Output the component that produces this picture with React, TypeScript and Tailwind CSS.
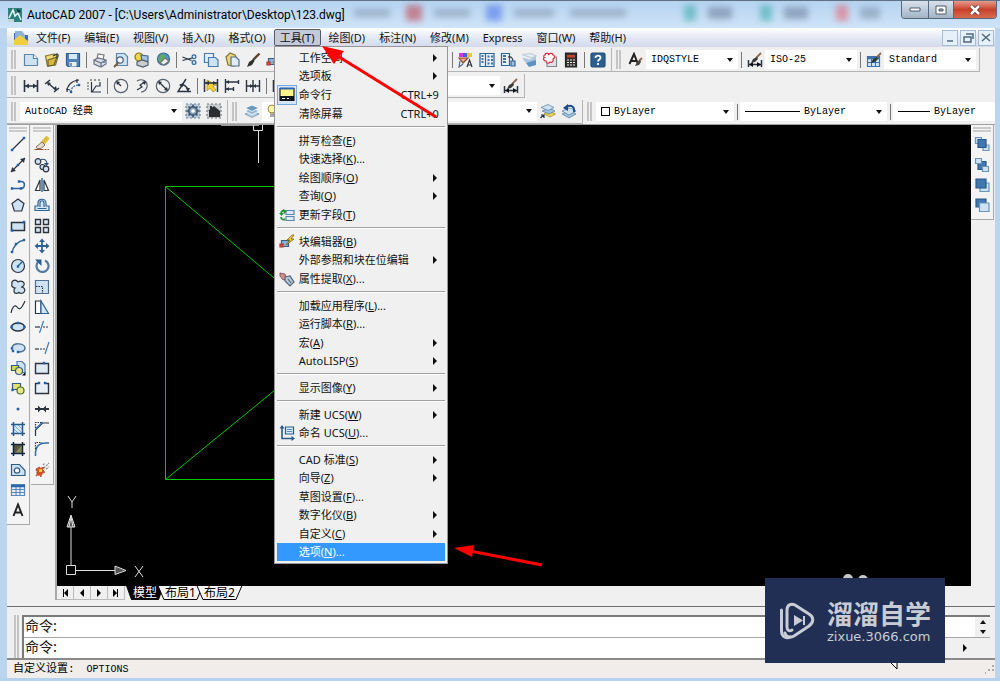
import React from 'react';
import { Undo2, Redo2, Hand, ZoomIn, ZoomOut, Search, Maximize } from 'lucide-react';

type IconFn = () => React.ReactElement;

const INK = '#2b3440';
const BLUE = '#2f6496';
const PALE = '#cfe2f1';

interface SvgProps {
  children: React.ReactNode;
  size?: number;
}

const Svg: React.FC<SvgProps> = ({ children, size = 16 }) => (
  <svg width={size} height={size} viewBox="0 0 16 16" fill="none" stroke={INK} strokeWidth="1.2" className="shrink-0" aria-hidden="true">
    {children}
  </svg>
);

const Dots: React.FC<{ at: number[][] }> = ({ at }) => (
  <>
    {at.map(([x, y]) => (
      <rect key={`${x}-${y}`} x={x - 1.2} y={y - 1.2} width="2.4" height="2.4" fill="#1f62a8" stroke="none" />
    ))}
  </>
);

// --- Standard toolbar ---
const NewFile: IconFn = () => (
  <Svg><path d="M1.5 2.5h9l4 4v7h-13z" fill={PALE} stroke="#5d86aa" /><path d="M10.5 2.5v4h4" fill="#fff" stroke="#5d86aa" /></Svg>
);
const OpenFile: IconFn = () => (
  <Svg><path d="M1.5 4l8-2 5 1-3 10-8 1z" fill="#f0dc70" stroke="#7d7440" /><path d="M4 8l9-3-3 8-6 1z" fill="#d9b93c" stroke="#6b6030" /><path d="M9 4l4-2v4" stroke={INK} /></Svg>
);
const SaveFile: IconFn = () => (
  <Svg><path d="M1.5 1.5h13v13H3L1.5 13z" fill="#4f83b6" stroke="#2d5f93" /><path d="M4 2h8v5H4z" fill="#d6e8f6" stroke="none" /><path d="M4.5 10h7v4.500h-7z" fill="#e8f1f8" stroke="none" /><path d="M6 11v3" stroke={BLUE} /></Svg>
);
const Print: IconFn = () => (
  <Svg><path d="M5 7l1-5 6 1-1 5" fill="#fff" stroke="#777" /><path d="M2 8l4-2 8 2v4l-5 3-7-3z" fill="#d9dde4" stroke="#6a7485" /><path d="M2 8l7 3 5-3M9 11v4" stroke="#6a7485" /><circle cx="12" cy="10" r="1" fill="#4f83b6" stroke="none" /></Svg>
);
const Preview: IconFn = () => (
  <Svg><path d="M3.5 1.5h8l3 3v9h-11z" fill={PALE} stroke="#5d86aa" /><circle cx="7" cy="8" r="3.2" fill="#eef6fc" stroke="#4b6176" /><path d="M5 11l-4 4" stroke="#7a5b34" strokeWidth="2" /></Svg>
);
const Publish: IconFn = () => (
  <Svg><circle cx="5" cy="5" r="4" fill="#f2d648" stroke="#87752a" /><path d="M7 3l7 1v5l-6 1z" fill="#9fc3e0" stroke="#466a8c" /><path d="M3 10l5-2 6 2v3l-5 2-6-2z" fill="#ccc" stroke="#555f70" /></Svg>
);
const Globe: IconFn = () => (
  <Svg><circle cx="8.5" cy="7" r="6" fill="#4e94cf" stroke="#376c9a" /><path d="M5 3c3-2 6 0 5 3s-4 1-3 4-3 0-4-2z" fill="#62ab5c" stroke="none" /><path d="M10 6l4 3-5 4-4-2z" fill="#eee" stroke="#777" /></Svg>
);
const Cut: IconFn = () => (
  <Svg><path d="M.5 5l9 3.500M.5 8.500L10 6" /><circle cx="12" cy="4.8" r="1.9" stroke={BLUE} /><circle cx="12" cy="10.5" r="1.9" stroke={BLUE} /></Svg>
);
const Copy: IconFn = () => (
  <Svg><path d="M1.5 1.5h9v9h-9z" fill="#e5f0f8" stroke="#4a7ba8" /><path d="M5.5 5.5h7L15 8v6.500H5.500z" fill={PALE} stroke="#4a7ba8" /></Svg>
);
const Paste: IconFn = () => (
  <Svg><path d="M2 5l4-4 5 2 3 6-4 5-6-1z" fill="#ead675" stroke="#887539" /><path d="M7 5h5l3 3v6H7z" fill="#e1ecf5" stroke="#4b6f90" /></Svg>
);
const Brush: IconFn = () => (
  <Svg><path d="M14.5 1.500L8 8" stroke="#5b4430" strokeWidth="2.4" /><path d="M8.5 7L4 10l-2 5 5-2 2.500-4z" fill="#30302f" stroke="none" /></Svg>
);
const Block: IconFn = () => (
  <Svg><path d="M2.5 6.500h7v6h-7z" fill="#8ab1d3" stroke="#3c5e80" /><path d="M1 13h3v-3H1z" fill="#e0593c" stroke="#a33" /><path d="M13 1L8 6h3L7 11l8-6h-3l3-4z" fill="#f6cf34" stroke="#7c6316" strokeWidth="0.8" /></Svg>
);
const Properties: IconFn = () => (
  <Svg><path d="M1 1h4v4H1z" fill="#d63ad2" stroke="none" /><path d="M5 1h4v4H5z" fill="#3a63de" stroke="none" /><path d="M9 1h5v4H9z" fill="#e7c832" stroke="none" /><path d="M1 6h9l-5 5z" fill="#e9a188" stroke="#91492f" /><path d="M2 9l-1 6 4-3" stroke="#4d7095" /><path d="M9 15l2.500-7 2.500 7M10 13h3" /></Svg>
);
const DesignCenter: IconFn = () => (
  <Svg><path d="M1 1.500h14v13H1z" fill="#e8f0f7" stroke={BLUE} /><path d="M6.5 2v12" stroke={BLUE} /><path d="M2.5 4h2M2.5 7h2M2.5 10h2M8.500 4.500h2M12 4.500h2M8.500 8h2M12 8h2M8.500 11.500h2M12 11.500h2" strokeWidth="2" stroke="#3d73a5" /></Svg>
);
const Palettes: IconFn = () => (
  <Svg><path d="M1.5 1.500h8v12h-8z" fill="#e8f0f7" stroke={BLUE} /><path d="M3 4h3M3 7h3M3 10h3" stroke="#3d73a5" strokeWidth="2" /><path d="M8 5c4-1 5 2 5 5" stroke={INK} /><path d="M11 9h4v5h-4z" fill="#9bc0de" stroke={BLUE} /></Svg>
);
const SheetSet: IconFn = () => (
  <Svg><path d="M1 2.500l9-1 5 2.500-4 2z" fill="#e6edf3" stroke="#c0cbd4" /><path d="M1 5.500l8 2 6-3.500v5l-6 3-5-2z" fill="#a9c8e2" stroke="none" /><path d="M5 11l10-3v5l-7 2z" fill="#5d93c2" stroke="none" /></Svg>
);
const Markup: IconFn = () => (
  <Svg><path d="M5 5h9.500v9.500H5z" fill="#dce2e8" stroke="#888" /><path d="M3 3c0-2 3-2 3.500-.5C8 1 11 1 11 3c2 0 2 3 0 4 1 2-1 4-3 3-1 2-4 1-4-1C1 9 1 6 2.500 5.500 1 5 2 3 3 3z" fill="#fff" stroke="#d5283d" /></Svg>
);
const Calc: IconFn = () => (
  <Svg><path d="M2.5 1h11v14h-11z" fill="#33302f" stroke="#222" /><path d="M4 3h8v2.500H4z" fill="#c7452f" stroke="none" /><path d="M4 8h8M4 10.500h8M4 13h8" stroke="#eee" strokeDasharray="2 1" /></Svg>
);
const Help: IconFn = () => (
  <Svg><rect x="1" y="1" width="14" height="14" rx="1.5" fill="#2c5e92" stroke="#234b75" /><path d="M5.5 6c0-3.500 5.500-3 5 0-.3 1.500-2.500 1.500-2.500 3.500M8 11v2" stroke="#fff" strokeWidth="1.8" /></Svg>
);

// --- Dimension toolbar ---
const DimLinear: IconFn = () => (
  <Svg><path d="M1.5 2v12M14.5 2v12M2 8h12" strokeWidth="1.6" /><path d="M2 8l4-2.500v5zM14 8l-4-2.500v5z" fill={INK} stroke="none" /></Svg>
);
const DimAligned: IconFn = () => (
  <Svg><path d="M1 6l5-4M10 14l5-4M4 5l8 7" strokeWidth="1.5" /><path d="M3 4l4 1-3 3zM13 12l-4-1 3-3z" fill={INK} stroke="none" /></Svg>
);
const DimArc: IconFn = () => (
  <Svg><path d="M2 14C2 7 7 3 14 2" stroke={INK} /><path d="M6 14c0-4 3-7 8-7" stroke={BLUE} strokeDasharray="2 1" /><Dots at={[[6, 14], [14, 7]]} /><path d="M1 11l4 1M12 1v4" /></Svg>
);
const DimOrdinate: IconFn = () => (
  <Svg><path d="M5.5 4v10H15M6 14l4-6h4V4" /><path d="M1 5h2M1 8h2M1 11h2M5 1v2M9 1v2M13 1v2" stroke="#555" /></Svg>
);
const DimRadius: IconFn = () => (
  <Svg><circle cx="8" cy="8" r="6.7" stroke="#59616b" /><path d="M8 8L4.500 4.500" stroke={INK} /><path d="M3 3l4 1-3 3z" fill={INK} stroke="none" /></Svg>
);
const DimJogged: IconFn = () => (
  <Svg><path d="M3 3c5-3 11 0 10 6-1 3-3 5-6 5" stroke="#59616b" /><path d="M3 12l5-3-2-2 5-3" /><path d="M12 3l-1 4-3-3z" fill={INK} stroke="none" /></Svg>
);
const DimDiameter: IconFn = () => (
  <Svg><circle cx="8" cy="8" r="6.7" stroke="#59616b" /><path d="M4 4l8 8" /><path d="M3 3l4 1-3 3zM13 13l-4-1 3-3z" fill={INK} stroke="none" /></Svg>
);
const DimAngular: IconFn = () => (
  <Svg><path d="M10 1L2 13.500h13M4 7c4-1 8 2 8 6" strokeWidth="1.4" /><path d="M3 7l4-2v4zM12 14l-2-4h4z" fill={INK} stroke="none" /></Svg>
);
const QuickDim: IconFn = () => (
  <Svg><path d="M4 2l10 5-4 1 3 4-3 2-3-4-3 3z" fill="#f0d232" stroke="#a08f20" strokeWidth="0.7" /><path d="M1.5 1v13M14.5 1v13M2 5h12" strokeWidth="1.5" /><path d="M2 5l4-2v4zM14 5l-4-2v4z" fill={INK} stroke="none" /></Svg>
);
const DimBaseline: IconFn = () => (
  <Svg><path d="M1.5 1v14M2 4h12M14.5 2v4M2 11h7M9.500 9v4" strokeWidth="1.4" /><path d="M2 4l3-2v4zM2 11l3-2v4z" fill={INK} stroke="none" /></Svg>
);
const DimContinue: IconFn = () => (
  <Svg><path d="M1.500 2v12M8 2v12M14.500 2v12M1 8h14" strokeWidth="1.4" /><path d="M8 8L5 6v4zM8 8l3-2v4z" fill={INK} stroke="none" /></Svg>
);
const DimStyle: IconFn = () => (
  <Svg><path d="M1.500 8v7M14.500 8v7M2 12.500h12" strokeWidth="1.5" /><path d="M2 12.500l4-2.500v5zM14 12.500l-4-2.500v5z" fill="#111" stroke="none" /><path d="M14 1L9 6" stroke="#8b6a52" strokeWidth="1.8" /><path d="M10 5L6 7l-2 4 4-1 3-3z" fill="#3a3a3a" stroke="none" /></Svg>
);
const TextStyle: IconFn = () => (
  <Svg><path d="M1.500 12L6 2l4 10M3 9h6" strokeWidth="2" stroke="#222" /><path d="M14 6l-3 3" stroke="#8b6a52" strokeWidth="1.8" /><path d="M12 8l-3 2-2 4 4-1 2-3z" fill="#444" stroke="none" /></Svg>
);
const TableStyle: IconFn = () => (
  <Svg><path d="M1.500 4.500h12v10h-12z" fill="#d8e8f6" stroke="#3773ad" /><path d="M1 6h12" stroke="#3773ad" strokeWidth="2.5" /><path d="M2 10.500h11M5.500 7v7M9.500 7v7" stroke="#3773ad" /><path d="M15 1l-5 5" stroke="#8b6a52" strokeWidth="1.8" /><path d="M11 5L7 7l-2 4 4-1 3-3z" fill="#2b3b33" stroke="none" /></Svg>
);

// --- Workspace and layer toolbar ---
const Gear: IconFn = () => (
  <Svg><path d="M1 1h14v14H1z" fill="#b9cad8" stroke="#6f8597" strokeDasharray="2 2" /><circle cx="8" cy="8" r="4.3" fill="#8ba4b8" stroke="#3f5870" strokeWidth="1.6" /><path d="M8 1.500v3M8 11.500v3M1.500 8h3M11.500 8h3M3.500 3.500l2 2M10.500 10.500l2 2M3.500 12.500l2-2M10.500 5.500l2-2" stroke="#3f5870" strokeWidth="1.7" /><circle cx="8" cy="8" r="1.8" fill="#fff" stroke="none" /></Svg>
);
const HomeSpace: IconFn = () => (
  <Svg><path d="M1 1h14v14H1z" fill="#c9ccce" stroke="#777" strokeDasharray="2 2" /><path d="M2 8l6-5 6 5v6H3V8zM4 3h2v3H4z" fill="#2b2d30" stroke="none" /></Svg>
);
const Layers: IconFn = () => (
  <Svg><path d="M1 11l7 3.500 7-3.500-7-3z" fill="#b9cfe0" stroke="#6f93b1" strokeWidth="0.8" /><path d="M1 8l7 3.500L15 8 8 5z" fill="#8db2d1" stroke="#fff" strokeWidth="0.8" /><path d="M1 5l7 3.500L15 5 8 2z" fill="#6b9ac1" stroke="#fff" strokeWidth="0.8" /></Svg>
);
const LayerCurrent: IconFn = () => (
  <Svg><path d="M4 11l6 3 5.500-3-6-3z" fill="#ead24a" stroke="#9c8b2c" strokeWidth="0.7" /><path d="M2 8l7 3 6-3-6-3z" fill="#9fc2de" stroke="#557c9e" strokeWidth="0.7" /><path d="M1 4.500l7 3 6-3-6-3z" fill="#cfe2f1" stroke="#557c9e" strokeWidth="0.7" /><path d="M.5 15l3-3M1 12h3v3" /></Svg>
);
const LayerPrev: IconFn = () => (
  <Svg><path d="M1 11l7 4 7-4-6-3z" fill="#9fc2de" stroke="#557c9e" strokeWidth="0.7" /><path d="M1 8l7 4 7-4-6-3z" fill="#cfe2f1" stroke="#557c9e" strokeWidth="0.7" /><path d="M13 9c1-5-3-8-7-5" stroke="#1e4c86" strokeWidth="2" /><path d="M7 1v7L2 5z" fill="#1e4c86" stroke="none" /></Svg>
);

// --- Draw toolbar ---
const DRAW_ICONS: [string, IconFn][] = [
  ['直线', () => <Svg><path d="M2 14L14 2" stroke={INK} /><Dots at={[[2, 14], [14, 2]]} /></Svg>],
  ['构造线', () => <Svg><path d="M1 15L15 1" stroke={INK} /><path d="M1 15l1-5 4 4zM15 1l-1 5-4-4z" fill={INK} stroke="none" /><Dots at={[[8, 8]]} /></Svg>],
  ['多段线', () => <Svg><path d="M1 11.500h10c4 0 5-7 0-7H9" stroke={BLUE} strokeWidth="1.6" /><Dots at={[[2, 11.5], [11, 11.5], [9, 4.5]]} /></Svg>],
  ['正多边形', () => <Svg><path d="M8 2l6 4.500L11.700 14H4.300L2 6.500z" fill={PALE} stroke={INK} /></Svg>],
  ['矩形', () => <Svg><path d="M1.500 4.500h13v8h-13z" fill={PALE} stroke={INK} strokeWidth="1.5" /><Dots at={[[2, 12.5], [14, 4]]} /></Svg>],
  ['圆弧', () => <Svg><path d="M2 15C3 8 8 3 14.500 2" stroke={BLUE} strokeWidth="1.5" /><Dots at={[[2, 14], [6, 6], [14, 2]]} /></Svg>],
  ['圆', () => <Svg><circle cx="8" cy="8" r="6.5" fill={PALE} stroke={INK} /><path d="M8 8l4-4" stroke="#1f62a8" strokeWidth="1.5" /><Dots at={[[8, 8.5]]} /></Svg>],
  ['修订云线', () => <Svg><path d="M2 5c-1-4 4-5 6-2 3-2 7 0 6 3-1 2-3 2-3 2 4 0 5 4 2 6-2 1-4 0-4-1-1 2-5 2-5-1 0-2 1-3 1-3-2 0-4-2-3-4z" fill={PALE} stroke={INK} /></Svg>],
  ['样条曲线', () => <Svg><path d="M1 14c1-6 4-9 6-6s4 3 8-6" stroke={INK} /></Svg>],
  ['椭圆', () => <Svg><ellipse cx="8" cy="8" rx="6.5" ry="4" fill={PALE} stroke={INK} strokeWidth="1.5" /><Dots at={[[8, 4], [1.5, 8], [14.5, 8]]} /></Svg>],
  ['椭圆弧', () => <Svg><path d="M2 8c0-6 13-5 13 0 0 3-3 4-7 4" fill={PALE} stroke="#53718d" strokeWidth="1.5" /><Dots at={[[2, 8.5], [8, 12], [3, 11]]} /></Svg>],
  ['插入块', () => <Svg><path d="M7 1.500h5l3 3v8H7z" fill={PALE} stroke="#4a7ba8" /><path d="M1.500 5.500h7v5h-7z" fill="#d8d84e" stroke="#305c86" /><circle cx="9" cy="11" r="3.5" fill="#e7e78b" stroke="#305c86" /><path d="M15.500 12v3.500H12z" fill="#000" stroke="none" /></Svg>],
  ['创建块', () => <Svg><path d="M2.500 3.500h8v6h-8z" fill="#e4e46b" stroke="#305c86" /><circle cx="10.5" cy="10.5" r="3.5" fill="#e7e78b" stroke="#4c6d2c" /><Dots at={[[2.5, 10]]} /></Svg>],
  ['点', () => <Svg><circle cx="8" cy="8" r="1.5" fill="#1f62a8" stroke="none" /></Svg>],
  ['图案填充', () => <Svg><path d="M3.500 3.500h9v9h-9z" fill="#dcebf7" stroke="none" /><path d="M1 3.500h14M1 12.500h14M3.500 1v14M12.500 1v14" stroke="#28598a" strokeWidth="1.5" /><path d="M4 8l4 4M4 4l8 8M8 4l4 4" stroke="#5d93c2" strokeWidth="0.8" /></Svg>],
  ['渐变色', () => <Svg><path d="M3.500 3.500h9v9h-9z" fill="#57583f" stroke="none" /><path d="M5 12l7-8v8z" fill="#8b8b5c" stroke="none" /><path d="M1 3.500h14M1 12.500h14M3.500 1v14M12.500 1v14" stroke="#10253c" strokeWidth="1.5" /></Svg>],
  ['面域', () => <Svg><path d="M1.500 2.500h8l5.500 6v5H1.500z" fill={PALE} stroke="#305c86" /><circle cx="7" cy="8.5" r="2.7" fill="#fff" stroke="#305c86" /></Svg>],
  ['表格', () => <Svg><path d="M1.500 2.500h13v11h-13z" fill="#e8f2fb" stroke="#5a88bd" /><path d="M1 4h14" stroke="#2f66a8" strokeWidth="2.5" /><path d="M2 7.500h12M2 10.500h12M6 5v8M10 5v8" stroke="#5a88bd" /></Svg>],
  ['多行文字', () => <Svg><path d="M3.500 14L8 2.500 12.500 14M5 10.500h6" stroke="#222" strokeWidth="1.9" /></Svg>],
];

// --- Modify toolbar ---
const MODIFY_ICONS: [string, IconFn][] = [
  ['删除', () => <Svg><path d="M14 1L8 8" stroke="#e0bd3a" strokeWidth="4.5" /><path d="M8 6l3 3-4 3.500H3L2 11z" fill="#e6dccb" stroke="#6b5d50" strokeWidth="0.8" /><path d="M.5 13.500H15" stroke="#a0522d" strokeDasharray="9 1 2 1" /></Svg>],
  ['复制', () => <Svg><circle cx="4" cy="4.5" r="2.8" fill={PALE} /><circle cx="8.5" cy="10" r="2.5" fill={PALE} /><circle cx="12" cy="12" r="2.8" fill={PALE} /><path d="M7 2.500c4-1 6 1 6 5" stroke="#1f4f88" /><path d="M10 6h5l-2.500 3z" fill="#1f4f88" stroke="none" /></Svg>],
  ['镜像', () => <Svg><path d="M6 3v10.500H1.500z" fill="#fff" /><path d="M10 3v10.500h4.500z" fill="#fff" /><path d="M8 1v14" stroke="#5d93c2" strokeWidth="2" /></Svg>],
  ['偏移', () => <Svg><path d="M1 13.500h14V9h-3V6c0-5-8-5-8 0v3H1z" fill="#d7e7f4" stroke={BLUE} /><path d="M3.500 11.500h9M6 10V6c0-3 4-3 4 0v4" stroke={BLUE} /></Svg>],
  ['阵列', () => <Svg><path d="M1.500 1.500h5v5h-5zM9.500 1.500h5v5h-5zM1.500 9.500h5v5h-5zM9.500 9.500h5v5h-5z" fill="#dfe9f1" stroke={INK} strokeWidth="1.4" /></Svg>],
  ['移动', () => <Svg><path d="M8 2v12M2 8h12" stroke={BLUE} strokeWidth="1.8" /><path d="M8 .5L11 4H5zM8 15.500l3-3.500H5zM.5 8L4 5v6zM15.500 8L12 5v6z" fill={BLUE} stroke="none" /></Svg>],
  ['旋转', () => <Svg><path d="M4 4a6 6 0 1 0 7-1.500" stroke="#527ba3" strokeWidth="2.2" /><path d="M1 1.500h6.500V8z" fill="#2c5e92" stroke="none" /></Svg>],
  ['缩放', () => <Svg><path d="M1.500 1.500h13v13h-13z" fill={PALE} stroke="#527091" /><path d="M2 7.500h6.500V14" strokeDasharray="1.5 1" /></Svg>],
  ['拉伸', () => <Svg><path d="M1.500 2v12.500H7V2z" fill="#fff" /><path d="M7 2l7.500 12.500H7z" fill="#d5e6f4" stroke={BLUE} /></Svg>],
  ['修剪', () => <Svg><path d="M1 8h5" /><path d="M9 8h6" strokeDasharray="2 1" /><path d="M9.500 2l-4 12" stroke="#3b7cc0" /></Svg>],
  ['延伸', () => <Svg><path d="M1 9h4" /><path d="M6 9h5" strokeDasharray="2 1" /><path d="M15 2l-4 12" stroke="#3b7cc0" /></Svg>],
  ['打断于点', () => <Svg><path d="M1.500 3.500h13v10h-13z" fill="#dfe9f1" stroke={INK} strokeWidth="1.4" /><Dots at={[[10, 3]]} /></Svg>],
  ['打断', () => <Svg><path d="M4 3.500H1.500v10h13v-10H12" fill="#e9f0f5" stroke={INK} strokeWidth="1.4" /><Dots at={[[5, 3], [11, 3]]} /></Svg>],
  ['合并', () => <Svg><path d="M1 8h14" strokeWidth="2" /><path d="M7.500 8L4 4.500v7zM8.500 8L12 4.500v7z" fill={INK} stroke="none" /></Svg>],
  ['倒角', () => <Svg><path d="M1.500 15V9l7-7H15" /><path d="M1.500 8l7-7" stroke="#3b7cc0" /><path d="M1.500 7V1.500H8" strokeDasharray="1.5 1" /></Svg>],
  ['圆角', () => <Svg><path d="M1.500 15V11C2 5 6 2 12 2h3" stroke="#2f6cad" strokeWidth="1.5" /><path d="M1.500 8V1.500H8" strokeDasharray="1.5 1" /></Svg>],
  ['分解', () => <Svg><path d="M2 7l3-2 2 1 3-1-1 3 2 2-3 2-1 3-2-2-3 1 1-3z" fill="#d2552a" stroke="#9c3a1a" strokeWidth="0.7" strokeDasharray="2 1" /><path d="M5 7h3v3H5z" fill="#f3c84a" stroke="none" /><path d="M10 6l5-5M12 7l3-2M9 3l2-2" stroke="#888" strokeDasharray="2 1" /></Svg>],
];

// --- Draw order toolbar ---
const ORDER_ICONS: [string, IconFn][] = [
  ['前置', () => <Svg><path d="M1.500 1.500h6v6h-6zM9 9h6v5.500H9z" fill={PALE} stroke="#6b94b8" /><path d="M4 3.500h8v8H4z" fill="#4178ad" stroke="#28598a" /></Svg>],
  ['后置', () => <Svg><path d="M4 4.500h8v8H4z" fill="#4178ad" stroke="#28598a" /><path d="M1.500 1.500h6v5h-6zM8.500 9.500h6v5h-6z" fill={PALE} stroke="#6b94b8" /></Svg>],
  ['置于对象之上', () => <Svg><path d="M6 6h9v8.500H6z" fill={PALE} stroke="#6b94b8" /><path d="M2 2h10v9H2z" fill="#4178ad" stroke="#28598a" /></Svg>],
  ['置于对象之下', () => <Svg><path d="M2 2h10v8H2z" fill="#4178ad" stroke="#28598a" /><path d="M5.500 6h9.500v8.500H5.500z" fill={PALE} stroke="#6b94b8" /></Svg>],
];

// Small filled triangle used by combos, scroll bars and submenus
const Arrow: React.FC<{ dir: 'up' | 'down' | 'right' }> = ({ dir }) => {
  const d = {
    up: 'M1 6l3-4 3 4z',
    down: 'M1 2h6L4 6z',
    right: 'M2 0v8l4-4z',
  }[dir];
  return (
    <svg width="8" height="8" viewBox="0 0 8 8" className="shrink-0" aria-hidden="true"><path d={d} fill="#111" /></svg>
  );
};

const Tool: React.FC<{ label: string; icon: IconFn }> = ({ label, icon: Icon }) => (
  <button type="button" aria-label={label} className="flex h-5 w-[21px] shrink-0 items-center justify-center">
    <Icon />
  </button>
);

const Sep = () => <div className="mr-[2px] ml-[3px] h-4 w-px shrink-0 bg-[#777]" />;

const Grip = () => <div className="mx-1 h-[19px] w-[5px] shrink-0 border-x-2 border-[#c4c4c4]" />;

const GripFlat = () => <div className="mb-[2px] h-[5px] w-[18px] border-y-2 border-[#cbcbcb]" />;

const Bar: React.FC<{ children: React.ReactNode }> = ({ children }) => (
  <div className="flex h-6 items-center border-r border-b border-[#b4b4b4] pr-[3px]">{children}</div>
);

interface ComboProps {
  label: string;
  value: string;
  width: string;
  lead?: React.ReactNode;
}

const Combo: React.FC<ComboProps> = ({ label, value, width, lead }) => (
  <div className={`flex h-[19px] shrink-0 items-center bg-white pr-1 pl-[5px] ${width}`}>
    {lead}
    <select
      aria-label={label}
      className="min-w-0 flex-1 appearance-none bg-transparent font-['Liberation_Mono','Noto_Sans_CJK_SC',monospace] text-[10px] text-black"
    >
      <option>{value}</option>
    </select>
    <Arrow dir="down" />
  </div>
);

const named = (prefix: string, icons: IconFn[]) =>
  icons.map((icon, i) => <Tool key={i} label={`${prefix} ${i + 1}`} icon={icon} />);

const lucide = (C: typeof Undo2): IconFn => () => <C size={15} strokeWidth={1.5} color="#2f6496" />;

// --- Tools menu ---
interface Entry {
  text: string;
  hot?: string;
  dots?: boolean;
  sub?: boolean;
  keys?: string;
  icon?: IconFn;
  boxed?: boolean;
  active?: boolean;
}

const CommandLine: IconFn = () => (
  <Svg><path d="M1 1.500h14v12H1z" fill="#fff38a" stroke="#222" /><path d="M1 9h14v5H1z" fill="#10151c" stroke="none" /><path d="M3 11.500h3M8 11.500h2" stroke="#fff" /><path d="M1 1.500h14" stroke="#2f66a8" strokeWidth="2" /></Svg>
);
const UpdateField: IconFn = () => (
  <Svg><path d="M7 3.500h8v4H7zM7 9.500h8v4H7z" fill="#dcebf7" stroke="#5a86b3" /><path d="M6 4C3 3 2 5 2 7M2 10c0 3 3 3 4 2" stroke="#27903c" strokeWidth="1.8" /><path d="M0 6h5L2.500 9zM4 2l4 2-3 3z" fill="#27903c" stroke="none" /></Svg>
);
const Extract: IconFn = () => (
  <Svg><path d="M1 2l5 1 2 5-4 1-3-4z" fill="#d28d8d" stroke="#7b4a4a" strokeWidth="0.8" /><path d="M6 6l5-1 4 6-4 4-5-5z" fill="#b9c8d6" stroke="#50667c" /><path d="M9 8l3 4" stroke="#50667c" /></Svg>
);
const NamedUcs: IconFn = () => (
  <Svg><path d="M3 2v11.500h11" stroke="#28598a" strokeWidth="1.6" /><path d="M3 0l2.500 3.500h-5zM16 13.500L12.500 11v5z" fill="#28598a" stroke="none" /><path d="M6.500 2h8v7h-8z" fill="#dcebf7" stroke="#28598a" /><path d="M8 4.500h5M8 6.500h5" stroke="#5a86b3" /></Svg>
);

const GROUPS: Entry[][] = [
  [
    { text: '工作空间', sub: true },
    { text: '选项板', sub: true },
    { text: '命令行', keys: 'CTRL+9', icon: CommandLine, boxed: true },
    { text: '清除屏幕', keys: 'CTRL+0' },
  ],
  [
    { text: '拼写检查', hot: 'E' },
    { text: '快速选择', hot: 'K', dots: true },
    { text: '绘图顺序', hot: 'O', sub: true },
    { text: '查询', hot: 'Q', sub: true },
    { text: '更新字段', hot: 'T', icon: UpdateField },
  ],
  [
    { text: '块编辑器', hot: 'B', icon: Block },
    { text: '外部参照和块在位编辑', sub: true },
    { text: '属性提取', hot: 'X', dots: true, icon: Extract },
  ],
  [
    { text: '加载应用程序', hot: 'L', dots: true },
    { text: '运行脚本', hot: 'R', dots: true },
    { text: '宏', hot: 'A', sub: true },
    { text: 'AutoLISP', hot: 'S', sub: true },
  ],
  [{ text: '显示图像', hot: 'Y', sub: true }],
  [
    { text: '新建 UCS', hot: 'W', sub: true },
    { text: '命名 UCS', hot: 'U', dots: true, icon: NamedUcs },
  ],
  [
    { text: 'CAD 标准', hot: 'S', sub: true },
    { text: '向导', hot: 'Z', sub: true },
    { text: '草图设置', hot: 'F', dots: true },
    { text: '数字化仪', hot: 'B', sub: true },
    { text: '自定义', hot: 'C', sub: true },
    { text: '选项', hot: 'N', dots: true, active: true },
  ],
];

const MenuEntry: React.FC<{ entry: Entry }> = ({ entry }) => {
  const Icon = entry.icon;
  return (
    <button
      type="button"
      role="menuitem"
      className={`flex w-full items-center pr-[6px] text-left leading-[18px] ${entry.boxed ? 'h-5' : 'h-[18px] odd:h-[19px]'} ${entry.active ? 'bg-[#3399ff] text-white' : ''}`}
    >
      <span className="flex w-[22px] shrink-0 justify-start">
        {Icon && (
          <span className={entry.boxed ? 'border border-[#7aa7dc] bg-[#d5e6f8] p-px' : 'pl-[2px]'}><Icon /></span>
        )}
      </span>
      <span className="flex-1 whitespace-nowrap">
        {entry.text}
        {entry.hot && <>(<u>{entry.hot}</u>)</>}
        {entry.dots && '...'}
      </span>
      {entry.keys}
      {entry.sub && <Arrow dir="right" />}
    </button>
  );
};

const ToolsMenu = () => (
  <div className="absolute top-full left-0 z-20 w-[174px]">
    <div role="menu" className="border border-[#979797] bg-[#f0f0f0] px-[2px] pt-px pb-[2px]">
      {GROUPS.map((group, i) => (
        <div key={i}>
          {i > 0 && <div className="my-[3px] h-[2px] border-t border-b border-t-[#a0a0a0] border-b-white" />}
          <div>
            {group.map((entry) => <MenuEntry key={entry.text} entry={entry} />)}
          </div>
        </div>
      ))}
    </div>
    {/* Red pointers: open the menu, then pick the last entry */}
    <svg width="280" height="530" className="pointer-events-none absolute top-0 left-0" fill="#fe0000" stroke="#fe0000" aria-hidden="true">
      <path d="M162 71L62 9" strokeWidth="3" />
      <path d="M48 0l22 5-10 13z" stroke="none" />
      <path d="M268 519l-72-14" strokeWidth="3" />
      <path d="M180 502l20-3-2 12z" stroke="none" />
    </svg>
  </div>
);

const MENUS = ['文件(F)', '编辑(E)', '视图(V)', '插入(I)', '格式(O)', '工具(T)', '绘图(D)', '标注(N)', '修改(M)', 'Express', '窗口(W)', '帮助(H)'];

const TitleBar = () => (
  <header className="relative flex h-[27px] items-center overflow-hidden bg-gradient-to-b from-[#b5d3f0] to-[#cfe4f8] pr-[3px] pl-2">
    {/* Taskbar shapes showing through the glass */}
    <div className="absolute top-1 right-[120px] left-[350px] flex h-4 items-center gap-3 opacity-40 blur-[3px]" aria-hidden="true">
      <span className="ml-1 h-2 w-9 bg-slate-500" />
      <span className="ml-1 h-4 w-4 bg-red-700" />
      <span className="h-2 w-9 bg-slate-500" />
      <span className="ml-1 h-4 w-4 bg-blue-700" />
      <span className="h-2 w-10 bg-slate-500" />
      <span className="ml-1 h-2 w-14 bg-slate-500" />
      <span className="ml-auto h-4 w-3 bg-teal-600" />
      <span className="h-3 w-6 bg-slate-600" />
      <span className="ml-4 h-4 w-3 bg-teal-600" />
      <span className="h-3 w-6 bg-slate-600" />
      <span className="ml-4 h-4 w-3 bg-red-500" />
      <span className="h-3 w-5 bg-slate-500" />
    </div>
    <svg width="14" height="14" viewBox="0 0 14 14" className="relative mr-[5px] shrink-0" aria-hidden="true">
      <path d="M0 0h14v14H0z" fill="#2d7f7c" />
      <path d="M1 10l4-8 2 6 3-3 3 7" fill="none" stroke="#eafaf8" strokeWidth="1.5" />
      <path d="M0 11h6v3H0z" fill="#fff" opacity=".7" />
      <path d="M9 1l4 2-3 2z" fill="#102f3a" />
    </svg>
    <h1 className="relative flex-1 font-['Roboto',sans-serif] text-[12px] whitespace-nowrap text-black">AutoCAD 2007 - [C:\Users\Administrator\Desktop\123.dwg]</h1>
    <div className="relative flex h-[18px] self-start overflow-hidden rounded-b border border-t-0 border-[#56697c]">
      <button type="button" aria-label="最小化" className="flex w-[26px] items-center justify-center bg-gradient-to-b from-[#d8e2ec] to-[#a3b4c6]">
        <svg width="12" height="6"><path d="M1 1h10v3H1z" fill="#fff" stroke="#4d5a68" /></svg>
      </button>
      <button type="button" aria-label="还原" className="flex w-[26px] items-center justify-center border-x border-[#56697c] bg-gradient-to-b from-[#d8e2ec] to-[#a3b4c6]">
        <svg width="12" height="10"><path d="M1 1h10v8H1z" fill="#fff" stroke="#4d5a68" /><path d="M4 4h4v2H4z" fill="#9db0c4" stroke="#4d5a68" /></svg>
      </button>
      <button type="button" aria-label="关闭" className="flex w-[42px] items-center justify-center bg-gradient-to-b from-[#e29a8b] via-[#c9402a] to-[#d5694e]">
        <svg width="12" height="10"><path d="M2 1l8 8M10 1L2 9" stroke="#5e2b24" strokeWidth="4" /><path d="M2 1l8 8M10 1L2 9" stroke="#fff" strokeWidth="2.5" /></svg>
      </button>
    </div>
  </header>
);

const MenuBar = () => (
  <nav className="flex h-[19px] items-center gap-[2px] bg-gradient-to-b from-white via-[#e4e9f5] to-[#d3daec] leading-4">
    <svg width="14" height="14" viewBox="0 0 14 14" className="ml-[7px] shrink-0" aria-hidden="true">
      <path d="M0 2h6l2 2h6v9H0z" fill="#3f6fae" />
      <path d="M1 0h7l3 4v5H1z" fill="#8fb2d8" />
      <path d="M0 9l6-5 8 6v4H0z" fill="#f0cf3f" />
    </svg>
    {MENUS.map((m) =>
      m.startsWith('工具') ? (
        <div key={m} className="relative">
          <button type="button" aria-haspopup="menu" aria-expanded="true" className="block h-[17px] rounded-xs border border-[#555b68] bg-[#c5cad8] px-[5px] leading-[15px] whitespace-nowrap">{m}</button>
          <ToolsMenu />
        </div>
      ) : (
        <button key={m} type="button" className="h-[17px] px-[6px] whitespace-nowrap">{m}</button>
      ),
    )}
    <div className="ml-auto flex gap-[2px] pr-px">
      {['M4 10h6', 'M5 3h7v5M3 6h7v5H3z', 'M3 3l8 7M11 3l-8 7'].map((d, i) => (
        <button key={d} type="button" aria-label={['最小化图形', '还原图形', '关闭图形'][i]} className="flex h-4 w-4 items-center justify-center border border-[#a9bccf] bg-[#e6f0f9]">
          <svg width="14" height="14" viewBox="0 0 14 14" fill="none" stroke="#51687e" strokeWidth="1.5"><path d={d} /></svg>
        </button>
      ))}
    </div>
  </nav>
);

const Toolbars = () => (
  <div className="border-b border-[#a0a0a0] bg-[#f0f0f0]">
    <div className="flex h-[26px] items-center overflow-hidden">
      <Bar>
        <Grip />
        {named('标准', [NewFile, OpenFile, SaveFile])}
        <Sep />
        {named('打印', [Print, Preview, Publish, Globe])}
        <Sep />
        {named('编辑', [Cut, Copy, Paste, Brush, Block])}
        <Sep />
        {named('历史', [lucide(Undo2), lucide(Redo2)])}
        <Sep />
        {named('平移', [lucide(Hand)])}
        <Sep />
        {named('缩放', [lucide(ZoomIn), lucide(ZoomOut), lucide(Search), lucide(Maximize)])}
        <Sep />
        {named('选项板', [Properties, DesignCenter, Palettes, SheetSet, Markup, Calc])}
        <Sep />
        <Tool label="帮助" icon={Help} />
      </Bar>
      <Bar>
        <Grip />
        <Tool label="文字样式管理器" icon={TextStyle} />
        <Combo label="文字样式" value="IDQSTYLE" width="w-[92px]" />
        <Sep />
        <Tool label="标注样式管理器" icon={DimStyle} />
        <Combo label="标注样式" value="ISO-25" width="w-[92px]" />
        <Sep />
        <Tool label="表格样式管理器" icon={TableStyle} />
        <Combo label="表格样式" value="Standard" width="w-[92px]" />
      </Bar>
    </div>
    <div className="flex h-[26px] items-center overflow-hidden">
      <Bar>
        <Grip />
        {named('标注', [DimLinear, DimAligned, DimArc, DimOrdinate])}
        <Sep />
        {named('半径', [DimRadius, DimJogged, DimDiameter, DimAngular])}
        <Sep />
        {named('快速标注', [QuickDim, DimBaseline, DimContinue])}
        <Sep />
        {named('公差', [DimLinear, DimRadius, DimAligned])}
        <Sep />
        <Combo label="当前标注样式" value="" width="w-[162px]" />
        <Tool label="标注样式" icon={DimStyle} />
      </Bar>
    </div>
    <div className="flex h-[25px] items-center overflow-hidden">
      <Bar>
        <Grip />
        <Combo label="工作空间" value="AutoCAD 经典" width="w-[162px]" />
        <Tool label="工作空间设置" icon={Gear} />
        <Tool label="我的工作空间" icon={HomeSpace} />
      </Bar>
      <Bar>
        <Grip />
        <Tool label="图层特性管理器" icon={Layers} />
        <Combo label="图层" value="" width="w-[275px]" lead={<svg width="10" height="14" viewBox="0 0 10 14" aria-hidden="true"><circle cx="5" cy="5" r="4" fill="#fff6a8" stroke="#97893a" /><path d="M3 9h4v4H3z" fill="#aaa" /></svg>} />
        <Tool label="置为当前" icon={LayerCurrent} />
        <Tool label="上一个图层" icon={LayerPrev} />
      </Bar>
      <div className="flex h-6 min-w-0 flex-1 items-center">
        <Grip />
        <Combo label="颜色" value="ByLayer" width="w-[138px]" lead={<span className="mr-1 h-[9px] w-[9px] border border-black" />} />
        <Sep />
        <Combo label="线型" value="ByLayer" width="w-[147px]" lead={<span className="mr-1 h-px w-[55px] bg-black" />} />
        <Sep />
        <Combo label="线宽" value="ByLayer" width="w-[130px]" lead={<span className="mr-1 h-px w-8 bg-black" />} />
      </div>
    </div>
  </div>
);

const Dock: React.FC<{ tools: [string, IconFn][] }> = ({ tools }) => (
  <div className="mr-px flex w-[23px] flex-col items-center self-start border-r border-b border-[#a8a8a8] bg-[#f4f4f4] pt-[2px] pb-1">
    <GripFlat />
    {tools.map(([label, Icon]) => (
      <button key={label} type="button" aria-label={label} className="flex h-5 w-5 items-center justify-center nth-[3n]:h-[21px]">
        <Icon />
      </button>
    ))}
  </div>
);

const Canvas = () => (
  <div className="relative flex-1 overflow-hidden bg-black">
    <svg width="400" height="380" className="absolute top-0 left-0" fill="none" aria-hidden="true">
      <path d="M108.500 61.500H383V354.500H108.500zM108.500 61.500L382 292M108.500 354.500L382 131" stroke="#00c400" />
      <path d="M164 .5h38" stroke="#999" />
      <path d="M196.500 0v5.500h9V0M201.500 5v33" stroke="#ddd" />
    </svg>
    <svg width="100" height="100" viewBox="0 0 100 100" className="absolute bottom-0 left-0" fill="none" stroke="#ddd" aria-hidden="true">
      <path d="M9.500 79.500h9v9h-9zM14 79V35M19 84.500h50" />
      <path d="M10 41l4-12 4 12zM58 80l11 4.500-11 4z" fill="#555" />
      <path d="M12 41l2-10 2 10" />
      <path d="M11 10l4 6 4-6M15 16v6M78 80l8 11M86 80l-8 11" />
    </svg>
  </div>
);

const LayoutTabs = () => (
  <div className="flex h-[14px] items-stretch bg-[#f0f0f0] text-[12px] leading-[14px]">
    {['M2 0h1v8H2zM7 0v8L3 4z', 'M6 0v8L2 4z', 'M2 0v8l4-4z', 'M1 0v8l4-4zM5 0h1v8H5z'].map((d, i) => (
      <button key={d} type="button" aria-label={['首个', '上一个', '下一个', '末个'][i]} className="flex w-[17px] items-center justify-center border-r border-b border-[#bbb]">
        <svg width="8" height="8" viewBox="0 0 8 8"><path d={d} fill="#000" /></svg>
      </button>
    ))}
    <div role="tablist" className="ml-1 flex">
      {['模型', '布局1', '布局2'].map((t, i) => (
        <button key={t} type="button" role="tab" aria-selected={i === 0} className={`relative h-[14px] px-1 whitespace-nowrap ${i === 0 ? 'text-white' : 'text-black'}`}>
          <svg viewBox="0 0 40 14" preserveAspectRatio="none" className="absolute inset-0 h-full w-full overflow-visible" aria-hidden="true">
            <path d="M-3 0L3 13.500H37L43 0" fill={i === 0 ? '#000' : '#f6f6f6'} stroke="#000" />
          </svg>
          <span className="relative">{t}</span>
        </button>
      ))}
    </div>
  </div>
);

const CommandPanel = () => (
  <section className="mt-[6px] flex h-[52px] border-t border-[#6f6f6f] bg-[#f0f0f0] pt-2 pr-[5px] pl-[7px] font-['Noto_Sans_CJK_SC',sans-serif] text-[14px] text-[#222]">
    <div className="mr-[3px] w-[5px] border-x-2 border-[#c4c4c4]" />
    <div className="flex flex-1 flex-col border-t-2 border-l-2 border-[#7a7a7a]">
      <div className="flex h-[21px] border-b border-[#a8a8a8] bg-white">
        <p className="flex-1 pl-px leading-4">命令:</p>
        <div className="flex w-[15px] flex-col items-center justify-between bg-[#f0f0f0] py-px"><Arrow dir="up" /><Arrow dir="down" /></div>
      </div>
      <div className="flex h-5">
        <label htmlFor="command" className="bg-white pl-px leading-4">命令:</label>
        <input id="command" className="min-w-0 flex-1 bg-white outline-none" />
        <div className="flex w-[200px] items-center justify-end bg-[#f0f0f0] pr-[21px]"><Arrow dir="right" /></div>
      </div>
    </div>
  </section>
);

const StatusBar = () => (
  <footer className="flex h-5 items-center justify-between border-t-2 border-[#8a8a8a] bg-[#f0edeb] pl-[6px] text-black">
    <p className="flex items-center gap-3 pt-px font-['Liberation_Mono','Noto_Sans_CJK_SC',monospace] text-[11px] leading-[17px]">
      自定义设置: <span className="text-[10px]">OPTIONS</span>
    </p>
    <svg width="12" height="12" aria-hidden="true"><path d="M10 2v8M6 6v4M2 10h1" stroke="#aaa" strokeWidth="2" strokeDasharray="2 2" /></svg>
  </footer>
);

const Watermark = () => (
  <aside className="absolute right-[55px] bottom-[15px] z-10">
    <svg width="30" height="8" className="absolute -top-1 left-[76px]" fill="#c8c8c8" aria-hidden="true"><circle cx="7" cy="5" r="5" /><circle cx="22" cy="6" r="5" /></svg>
    <div className="relative flex h-[85px] w-[180px] items-center gap-3 bg-[#212f55] pl-[14px] text-[#c8ccd4]">
      <svg width="36" height="38" viewBox="0 0 36 38" fill="none" stroke="currentColor" strokeWidth="3" strokeLinecap="round" aria-hidden="true">
        <path d="M2.500 8v21c0 6 5 8 9 6" />
        <path d="M13 28c-3 2-5 0-5-3V8c0-5 4-7 8-5l14 9c5 3 5 8 0 12l-15 10c-4 2-8 1-9-3" />
        <path d="M15 13v11l9-5.500z" fill="currentColor" stroke="none" />
        <path d="M25 14v9" strokeWidth="2" strokeLinecap="butt" />
      </svg>
      <div className="font-['Noto_Sans_CJK_SC',sans-serif]">
        <p className="text-[26px] leading-8 font-bold whitespace-nowrap">溜溜自学</p>
        <p className="font-['DejaVu_Sans',sans-serif] text-[13px] leading-4">zixue.3066.com</p>
      </div>
    </div>
    <svg width="12" height="8" className="absolute top-full right-11" aria-hidden="true"><path d="M2 0l6 6V0" fill="#fff" stroke="#000" /></svg>
  </aside>
);

const App: React.FC = () => (
  <div className="relative flex min-h-screen flex-col overflow-hidden border-t border-b-[3px] border-t-[#5f7385] border-b-[#b4d2ee] bg-[#bcd5ee] font-['Noto_Sans','Noto_Sans_CJK_SC',sans-serif] text-[11px] text-[#111]">
    <TitleBar />
    <div className="mr-[5px] ml-[7px] flex flex-1 flex-col bg-[#f0f0f0]">
      <MenuBar />
      <Toolbars />
      <main className="flex flex-1 flex-col">
        <div className="flex flex-1">
          <Dock tools={DRAW_ICONS} />
          <Dock tools={MODIFY_ICONS} />
          <div className="flex flex-1 flex-col border-l-2 border-[#a9a9a9]">
            <Canvas />
            <LayoutTabs />
          </div>
          <Dock tools={ORDER_ICONS} />
        </div>
        <CommandPanel />
      </main>
      <StatusBar />
    </div>
    <Watermark />
  </div>
);

export default App;
